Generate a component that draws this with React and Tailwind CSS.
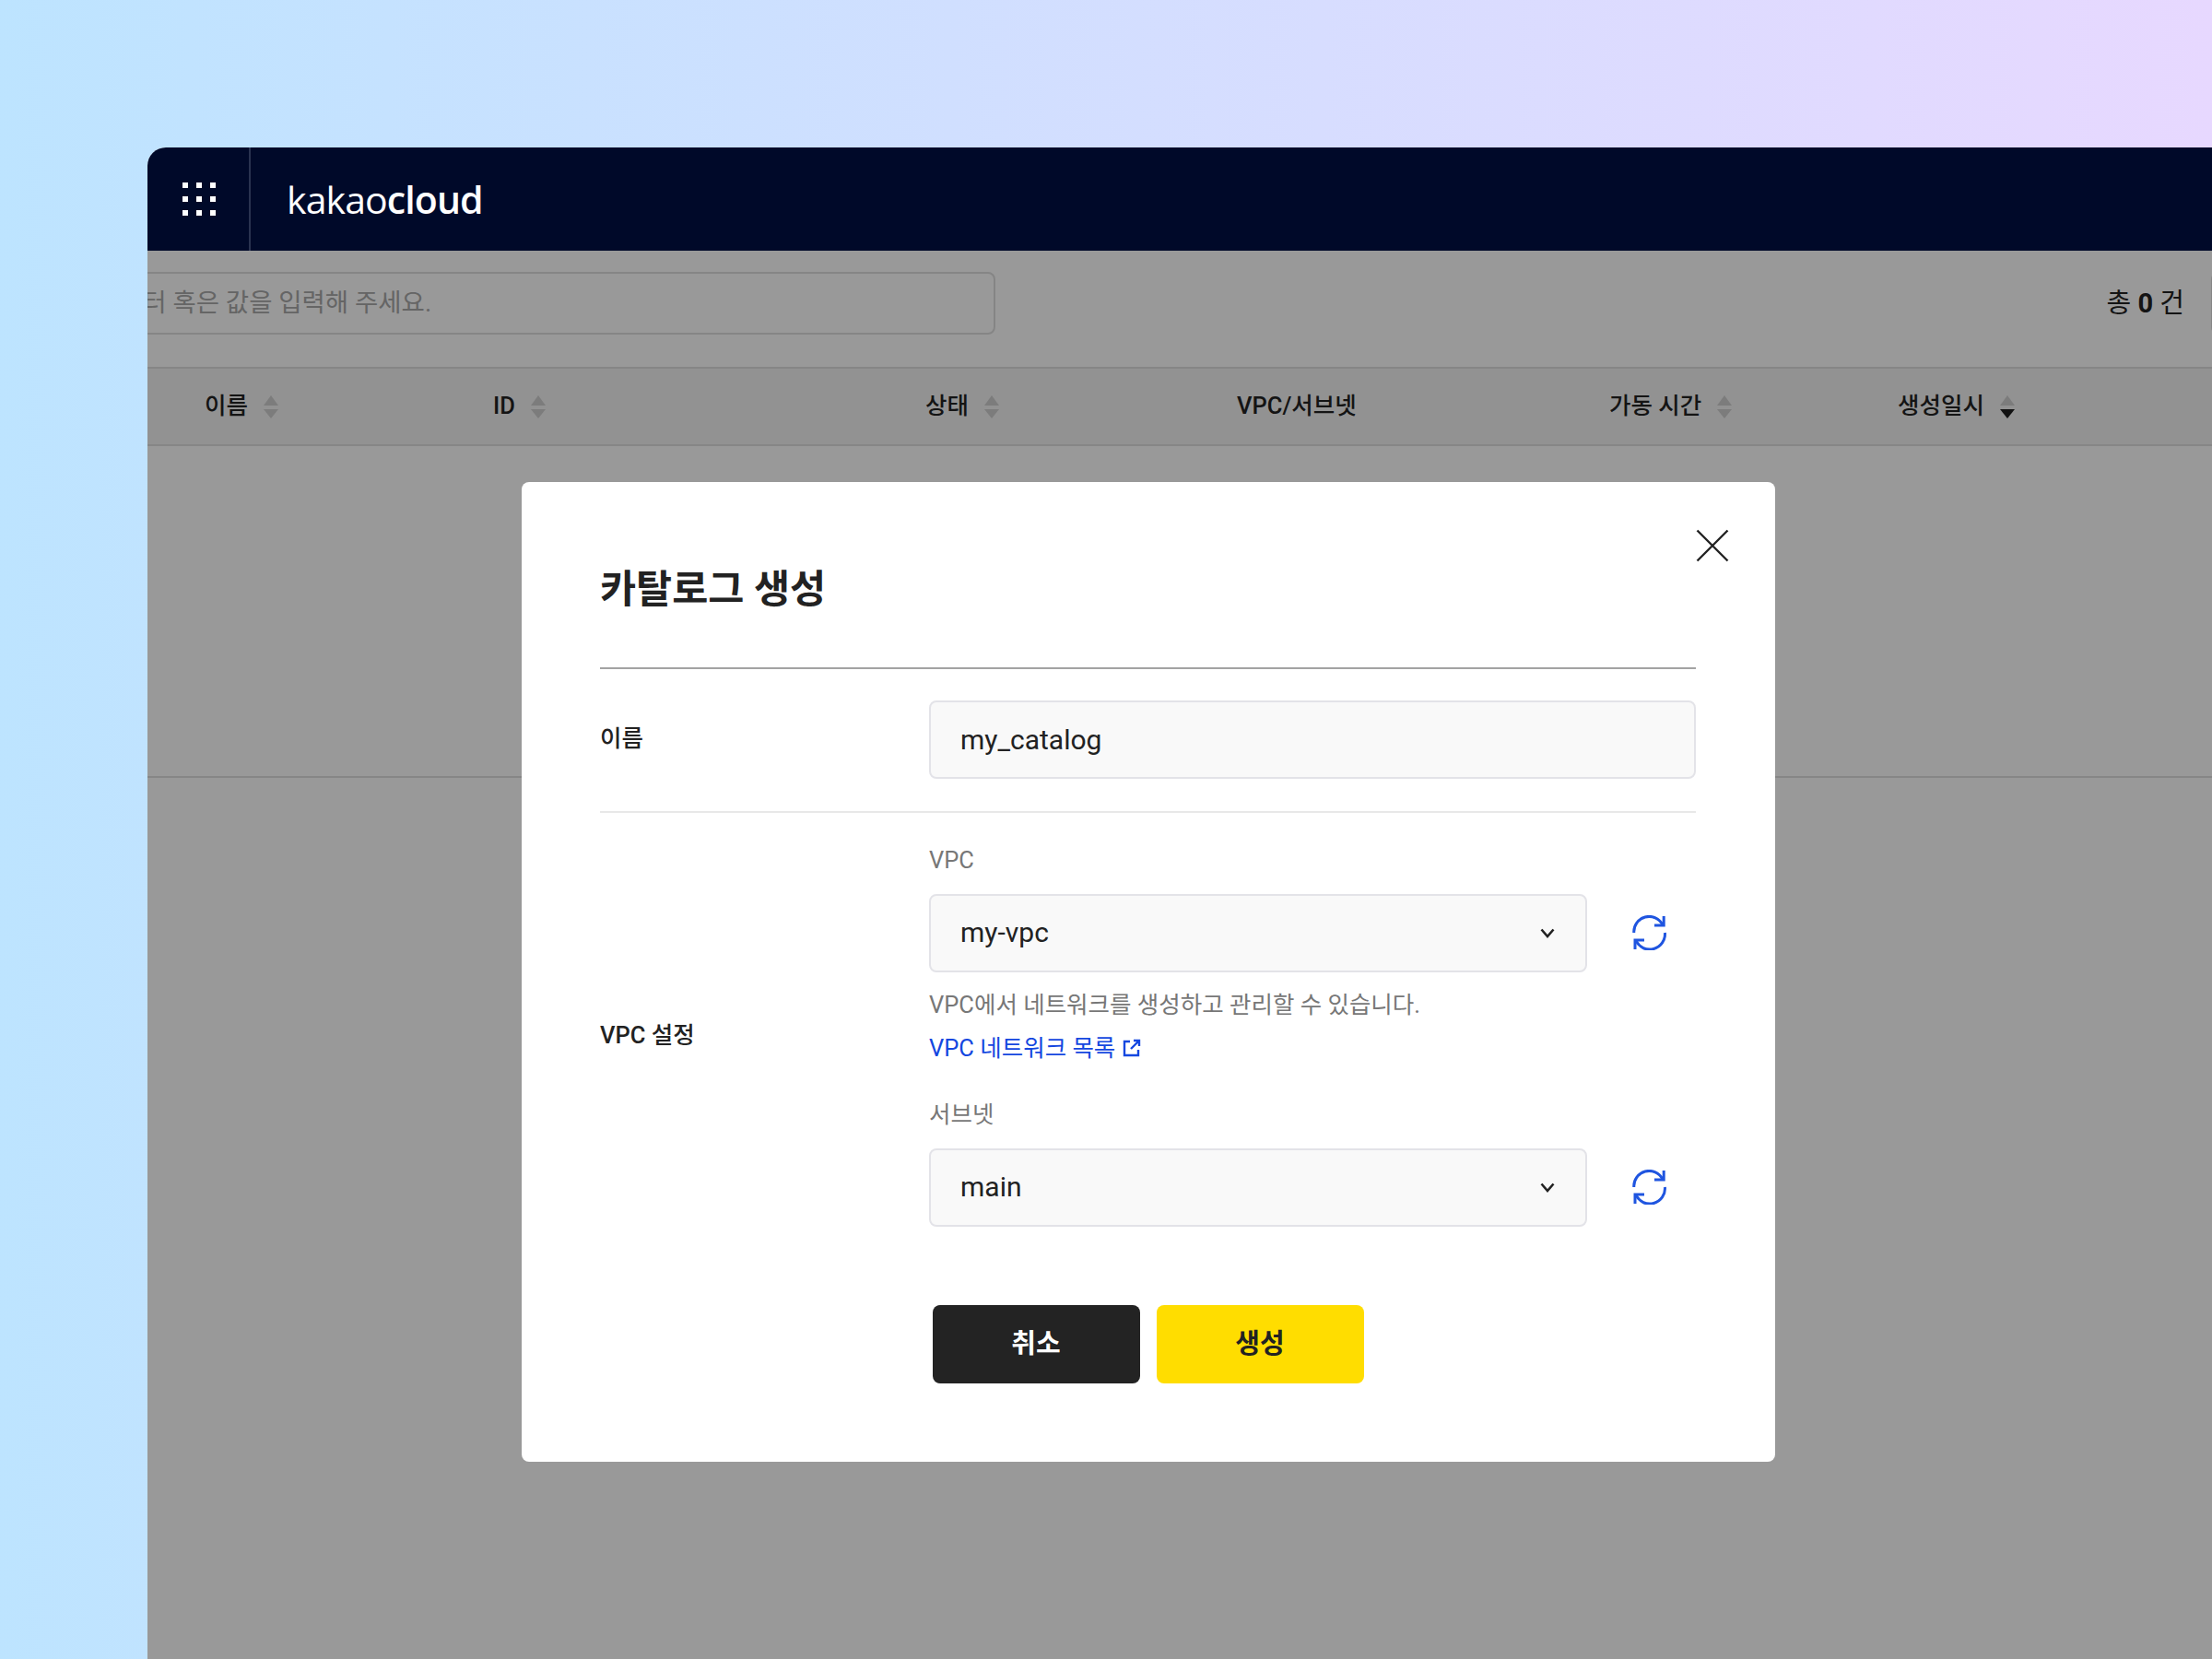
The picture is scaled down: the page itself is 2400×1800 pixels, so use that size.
import React from "react";

const font = "font-['Roboto','Noto_Sans_CJK_KR',sans-serif]";

const SortIcon = ({ active }) => (
  <svg width="16" height="25" viewBox="0 0 16 25" className="shrink-0">
    <path d="M8 0 L16 11 L0 11 Z" fill="#cfcfcf" />
    <path d="M0 15 L16 15 L8 25 Z" fill={active ? "#1f1f1f" : "#cfcfcf"} />
  </svg>
);

const Column = ({ label, width, active, sort = true }) => (
  <div className={`flex items-center gap-[17px] shrink-0 ${width}`}>
    <span className="pb-[2px] text-[25.5px] font-medium leading-9 text-[#222]">{label}</span>
    {sort && <SortIcon active={active} />}
  </div>
);

const RefreshIcon = () => (
  <svg width="37" height="38" viewBox="0 0 37 38" fill="none" stroke="#1f55e0" strokeWidth="3" className="shrink-0">
    <path d="M1.8 19 A16.5 16.5 0 0 1 33 10.5" />
    <path d="M34.2 1 V11 H24" />
    <path d="M35.4 19 A16.5 16.5 0 0 1 4 27.5" />
    <path d="M3 37 V27 H13" />
  </svg>
);

const SelectRow = ({ value }) => (
  <div className="flex items-center">
    <div className="flex h-[85px] w-[714px] items-center justify-between rounded-lg border-2 border-[#e3e3e8] bg-[#f9f9f9] pl-[32px] pr-[33px]">
      <span className="pb-[2px] text-[30px] text-[#222]">{value}</span>
      <svg width="16" height="11" viewBox="0 0 16 11" fill="none" stroke="#222" strokeWidth="2.6">
        <path d="M1.5 1.5 L8 9 L14.5 1.5" />
      </svg>
    </div>
    <div className="mb-[2px] ml-[49px]">
      <RefreshIcon />
    </div>
  </div>
);

const App = () => {
  return (
    <div className={`h-[1800px] w-[2400px] overflow-hidden bg-gradient-to-r from-[#bde4ff] to-[#e7d8ff] pl-[160px] pt-[160px] ${font}`}>
      <div className="flex h-[1640px] w-[2240px] flex-col overflow-hidden rounded-tl-[20px] bg-white">
        <header className="flex h-[112px] shrink-0 items-center bg-[#000929]">
          <div className="flex h-full w-[112px] items-center justify-center border-r-2 border-[#2a3350] pl-[1px]">
            <div className="grid grid-cols-3 gap-[9px]">
              {Array.from({ length: 9 }).map((_, i) => (
                <span key={i} className="size-[6px] bg-white" />
              ))}
            </div>
          </div>
          <div className="ml-[39px] font-['Open_Sans',sans-serif] text-[41px] leading-none tracking-[-0.9px] text-white">
            <span className="font-normal">kakao</span>
            <span className="font-semibold">cloud</span>
          </div>
        </header>

        <main className="relative flex-1">
          <div className="flex h-[126px] items-start justify-between pt-[23px]">
            <div className="-ml-[60px] flex h-[68px] w-[980px] items-center rounded-lg border-2 border-[#dedede] pl-[28px] text-[27.5px] text-[#a8a8a8]">
              필터 혹은 값을 입력해 주세요.
            </div>
            <div className="flex items-start">
              <span className="pt-[16px] text-[29px] leading-9 text-[#222]">
                총 <b className="font-bold">0</b> 건
              </span>
              <div className="ml-[29px] mr-[-11px] h-[68px] w-[12px] rounded-l-lg border-2 border-[#dedede]" />
            </div>
          </div>
          <div className="flex h-[86px] items-center border-y-2 border-[#e0e0e0] bg-[#f3f3f3] pl-[62px]">
            <Column label="이름" width="w-[313px]" />
            <Column label="ID" width="w-[469px]" />
            <Column label="상태" width="w-[338px]" />
            <Column label="VPC/서브넷" width="w-[404px]" sort={false} />
            <Column label="가동 시간" width="w-[313px]" />
            <Column label="생성일시" width="w-[200px]" active />
          </div>
          <div className="h-[360px] border-b-2 border-[#e0e0e0]" />

          <div className="absolute inset-0 bg-black/40">
            <div className="relative ml-[406px] mt-[251px] w-[1360px] rounded-lg bg-white pb-[85px] pl-[85px] pr-[86px] pt-[87px]">
              <svg width="36" height="36" viewBox="0 0 36 36" fill="none" stroke="#222" strokeWidth="2.4" className="absolute right-[50px] top-[51px]">
                <path d="M1.5 1.5 L34.5 34.5 M34.5 1.5 L1.5 34.5" />
              </svg>
              <h2 className="text-[42.5px] font-semibold leading-[60px] text-[#222]">카탈로그 생성</h2>

              <div className="mt-[54px] flex items-center border-y-2 border-b-[#e8e8e8] border-t-[#a3a3a3] pb-[35px] pt-[34px]">
                <span className="w-[357px] shrink-0 pb-[2px] text-[25.5px] font-medium text-[#222]">이름</span>
                <div className="flex h-[85px] flex-1 items-center rounded-lg border-2 border-[#e3e3e8] bg-[#f9f9f9] pl-[32px] text-[30px] text-[#222]">
                  my_catalog
                </div>
              </div>

              <div className="flex items-center pt-[33px]">
                <span className="w-[357px] shrink-0 text-[25.5px] font-medium text-[#222]">VPC 설정</span>
                <div className="flex-1 text-[25.5px]">
                  <div className="leading-9 text-[#777]">VPC</div>
                  <div className="mt-[19px]">
                    <SelectRow value="my-vpc" />
                  </div>
                  <div className="mt-[17px] leading-9 text-[#777]">VPC에서 네트워크를 생성하고 관리할 수 있습니다.</div>
                  <div className="mt-[11px] flex items-center gap-[8px] leading-9 text-[#1447e0]">
                    VPC 네트워크 목록
                    <svg width="20" height="20" viewBox="0 0 20 20" fill="none" stroke="#1447e0" strokeWidth="2.4">
                      <path d="M8 3 H2 V18 H17 V12" />
                      <path d="M12 2 H18 V8 M18 2 L9 11" />
                    </svg>
                  </div>
                  <div className="mt-[36px] leading-9 text-[#777]">서브넷</div>
                  <div className="mt-[19px]">
                    <SelectRow value="main" />
                  </div>
                </div>
              </div>

              <div className="mt-[85px] flex justify-center gap-[18px]">
                <button className="h-[85px] w-[225px] rounded-lg bg-[#232323] text-[29px] font-bold text-white">취소</button>
                <button className="h-[85px] w-[225px] rounded-lg bg-[#ffdd00] text-[29px] font-bold text-[#222]">생성</button>
              </div>
            </div>
          </div>
        </main>
      </div>
    </div>
  );
};

export default App;
